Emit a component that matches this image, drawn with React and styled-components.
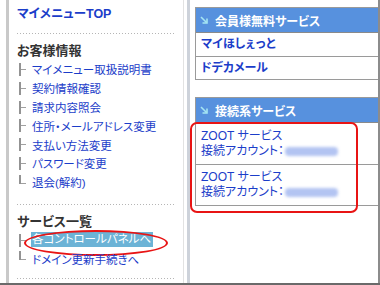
import React from 'react';
import styled, { createGlobalStyle } from 'styled-components';

const GlobalStyle = createGlobalStyle`
  html, body {
    margin: 0;
    padding: 0;
    background: #fff;
  }
  body {
    font-family: "Liberation Sans", "Noto Sans CJK JP", sans-serif;
    font-feature-settings: "palt";
  }
  * { box-sizing: border-box; }
`;

const linkBlue = '#1b3dc9';

const Frame = styled.div`
  display: flex;
  width: 380px;
  height: 285px;
  padding-left: 6px;
  border-bottom: 2px solid #6a6a6a;
  background: #fff;
`;

const SideMenu = styled.div`
  width: 178px;
  padding: 0 7px 0 8px;
  border-left: 3px solid #c9c9c9;
  border-right: 1px solid #e2e2e2;
`;

const Gutter = styled.div`
  width: 3px;
  margin-left: 3px;
  background: #cdd2da;
`;

const Main = styled.div`
  flex: 1;
  padding: 7px 0 0 5px;
  border-right: 2px solid #8c8c8c;
`;

const TopLink = styled.a`
  display: block;
  margin-top: 6px;
  line-height: 16px;
  font-size: 12.5px;
  font-weight: bold;
  color: ${linkBlue};
  text-decoration: none;
`;

const Dots = styled.div`
  height: 1px;
  margin: ${p => p.$space};
  background-image: linear-gradient(to right, #b5b5b5 1px, transparent 1px);
  background-size: 3px 1px;
`;

const Heading = styled.div`
  margin-top: ${p => p.$top}px;
  line-height: 18px;
  font-size: 13px;
  font-weight: bold;
  color: #333;
`;

const List = styled.ul`
  margin: 0;
  padding: 0;
  list-style: none;
`;

const Item = styled.li`
  position: relative;
  display: flex;
  align-items: center;
  height: 18.8px;
  padding-left: 1px;
  font-size: 11.5px;
  color: ${linkBlue};
  white-space: nowrap;
`;

const Branch = styled.span`
  position: relative;
  flex: none;
  align-self: flex-start;
  width: 14px;
  height: ${p => (p.$last ? '9px' : '13px')};
  margin-top: ${p => (p.$last ? '2px' : '3px')};

  &::before {
    content: '';
    position: absolute;
    left: 1px;
    top: 0;
    bottom: 0;
    width: 2px;
    background: #939393;
  }
  &::after {
    content: '';
    position: absolute;
    left: 3px;
    width: 5px;
    height: 1px;
    top: ${p => (p.$last ? 'auto' : '6px')};
    bottom: ${p => (p.$last ? '0' : 'auto')};
    background: #a0a0a0;
  }
`;

const Highlight = styled.span`
  padding: 1px 2px 1px 1px;
  margin-left: -1px;
  line-height: 13px;
  background: #6cb3d6;
  color: #fff;
`;

const Ellipse = styled.span`
  position: absolute;
  left: 7px;
  top: -1px;
  width: 144px;
  height: 26px;
  border: 2px solid #e81414;
  border-radius: 50%;
  pointer-events: none;
`;

const Box = styled.div`
  margin-bottom: 17px;
  border: 1px solid #9a9a9a;
  border-right: none;
`;

const BoxHeader = styled.div`
  display: flex;
  align-items: center;
  gap: 7px;
  height: 25px;
  padding-left: 4px;
  border-bottom: 1px solid #8a8a8a;
  background: #5791de;
  color: #fff;
  font-size: 12px;
  font-weight: bold;
`;

const BoxBody = styled.div`
  position: relative;
`;

const Row = styled.div`
  display: flex;
  flex-direction: column;
  justify-content: center;
  min-height: ${p => (p.$tall ? '41px' : '23px')};
  padding: 0 5px;
  border-top: ${p => (p.$first ? 'none' : '1px solid #9a9a9a')};
  color: ${linkBlue};
  font-size: 12px;
  font-weight: ${p => (p.$bold ? 'bold' : 'normal')};
  line-height: 15px;
`;

const Blurred = styled.span`
  display: inline-block;
  width: 53px;
  height: 9px;
  margin-left: 1px;
  vertical-align: -1px;
  border-radius: 4px;
  background: #b3c4f2;
  filter: blur(1.5px);
`;

const Callout = styled.span`
  position: absolute;
  left: -6px;
  top: -1px;
  width: 168px;
  height: 91px;
  border: 2px solid #e81414;
  border-radius: 7px;
  pointer-events: none;
`;

const Arrow = () => (
  <svg width="8" height="8" viewBox="0 0 8 8" aria-hidden="true">
    <path d="M1 1 L6.5 6.5" stroke="#a6e6f2" strokeWidth="1.6" fill="none" />
    <path d="M7 2.5 V7 H2.5" stroke="#a6e6f2" strokeWidth="1.6" fill="none" />
  </svg>
);

const customerItems = [
  'マイメニュー取扱説明書',
  '契約情報確認',
  '請求内容照会',
  '住所・メールアドレス変更',
  '支払い方法変更',
  'パスワード変更',
  '退会(解約)',
];

const MenuList = ({ items }) => (
  <List>
    {items.map((item, i) => (
      <Item key={item.label}>
        <Branch $last={i === items.length - 1} />
        {item.active ? <Highlight>{item.label}</Highlight> : item.label}
        {item.active && <Ellipse />}
      </Item>
    ))}
  </List>
);

const ZootRow = ({ first }) => (
  <Row $tall $first={first}>
    <span>ZOOT サービス</span>
    <span>
      接続アカウント：
      <Blurred />
    </span>
  </Row>
);

export default function App() {
  return (
    <>
      <GlobalStyle />
      <Frame>
        <SideMenu>
          <TopLink>マイメニューTOP</TopLink>
          <Dots $space="11px 0 0" />
          <Heading $top={8}>お客様情報</Heading>
          <MenuList items={customerItems.map(label => ({ label }))} />
          <Dots $space="12px 0 0" />
          <Heading $top={8}>サービス一覧</Heading>
          <MenuList
            items={[
              { label: '各コントロールパネルへ', active: true },
              { label: 'ドメイン更新手続きへ' },
            ]}
          />
          <Dots $space="10px 0 0" />
        </SideMenu>
        <Gutter />
        <Main>
          <Box>
            <BoxHeader>
              <Arrow />
              会員様無料サービス
            </BoxHeader>
            <BoxBody>
              <Row $first $bold>マイほしぇっと</Row>
              <Row $bold>ドデカメール</Row>
            </BoxBody>
          </Box>
          <Box>
            <BoxHeader>
              <Arrow />
              接続系サービス
            </BoxHeader>
            <BoxBody>
              <ZootRow first />
              <ZootRow />
              <Callout />
            </BoxBody>
          </Box>
        </Main>
      </Frame>
    </>
  );
}
